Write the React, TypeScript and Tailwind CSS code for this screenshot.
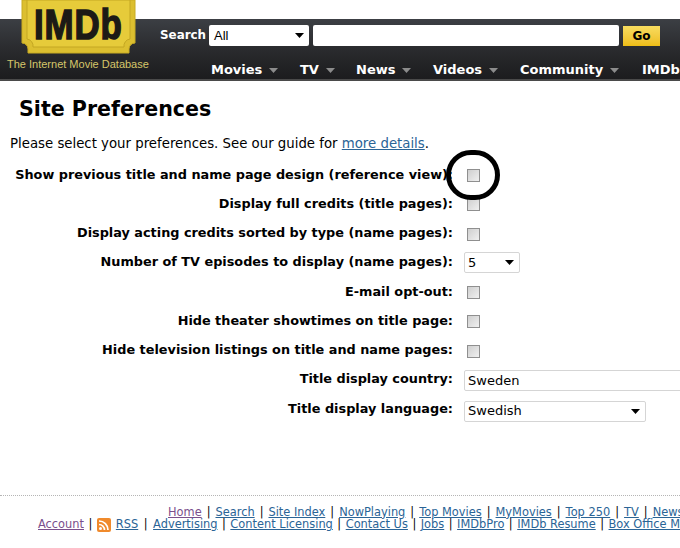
const FONT = "font-['DejaVu_Sans',Verdana,sans-serif]"

const NAV = [
  { label: 'Movies', cls: 'w-[89px]' },
  { label: 'TV', cls: 'w-[56px]' },
  { label: 'News', cls: 'w-[77px]' },
  { label: 'Videos', cls: 'w-[87px]' },
  { label: 'Community', cls: 'w-[122px]' },
]

const FOOT_1 = ['Home', 'Search', 'Site Index', 'NowPlaying', 'Top Movies', 'MyMovies', 'Top 250', 'TV', 'News', 'Showtimes']
const FOOT_2 = ['Advertising', 'Content Licensing', 'Contact Us', 'Jobs', 'IMDbPro', 'IMDb Resume', 'Box Office Mojo']

function Arrow({ cls = 'text-black' }: { cls?: string }) {
  return (
    <svg width="9" height="5" viewBox="0 0 9 5" className={cls}>
      <path d="M0 0h9L4.5 5z" fill="currentColor" />
    </svg>
  )
}

function Logo() {
  return (
    <div className="absolute left-[21px] top-0 flex h-[54px] w-[115px] items-center justify-center overflow-hidden">
      <svg width="115" height="54" viewBox="0 0 115 54" className="absolute inset-0">
        <path d="M1 0h113v43a6 6 0 0 0-6 6v4H7v-4a6 6 0 0 0-6-6z" fill="#dcbf30" stroke="#c8ab22" strokeWidth="1" />
        <path d="M6 0h103v39a7 7 0 0 0-6 8H12a7 7 0 0 0-6-8z" fill="#e6cb3a" stroke="#c4a722" strokeWidth="1" />
      </svg>
      <span className="relative mt-[-5px] scale-x-[0.83] font-['Liberation_Sans',sans-serif] text-[42px] leading-none font-bold tracking-[1px] text-[#1c1a16] [-webkit-text-stroke:1.5px_#1c1a16]">
        IMDb
      </span>
    </div>
  )
}

function Check() {
  return (
    <input
      type="checkbox"
      className="mt-[3px] ml-[3px] block h-[13px] w-[13px] appearance-none border border-[#8f8f8f] bg-gradient-to-br from-[#cfcfcf] to-[#f0f0f0]"
    />
  )
}

function Pick({ value, cls }: { value: string; cls: string }) {
  return (
    <div className={`flex h-[21px] items-center justify-between rounded-[2px] border border-[#d5d5d5] bg-white pr-[5px] pl-[3px] text-[13px] text-black ${cls}`}>
      <span>{value}</span>
      <Arrow />
    </div>
  )
}

function Row({ label, children }: { label: string; children: React.ReactNode }) {
  return (
    <div className="flex h-[29.25px] items-center">
      <div className="w-[453px] shrink-0 text-right text-[12.83px] font-bold whitespace-nowrap text-black">{label}</div>
      <div className="ml-[11px]">{children}</div>
    </div>
  )
}

function FootLinks({ items, sep }: { items: string[]; sep: string }) {
  return (
    <>
      {items.map((t, i) => (
        <span key={t}>
          {i > 0 && <span className={`${sep} text-black`}>|</span>}
          <span className={t === 'Home' ? 'text-[#7a4f8c] underline' : 'text-[#2a6496] underline'}>{t}</span>
        </span>
      ))}
    </>
  )
}

export default function App() {
  return (
    <div className={`relative h-[548px] w-[680px] overflow-hidden bg-white ${FONT}`}>
      <div className="mt-[19px] h-[62px] border-b-2 border-[#4a4a4a] bg-gradient-to-b from-[#3c3f44] via-[#2a2b2e] to-[#1c1c1e]">
        <div className="flex h-[33px] items-center pl-[160px]">
          <span className="w-[49px] text-[11.9px] font-bold text-white">Search</span>
          <Pick value="All" cls="w-[100px] !pl-[5px] text-[12px] font-['Liberation_Sans',sans-serif] border-0" />
          <div className="ml-[4px] h-[21px] w-[306px] rounded-[2px] bg-white" />
          <div className="ml-[4px] flex h-[20px] w-[37px] items-center justify-center bg-gradient-to-b from-[#f8dc5e] to-[#eebd12] text-[12px] font-bold text-black">
            Go
          </div>
        </div>
        <div className="flex items-center pt-[9px] pl-[211px] text-[13px] leading-[18px] font-bold whitespace-nowrap text-white">
          {NAV.map((n) => (
            <div key={n.label} className={`flex shrink-0 items-center gap-[7px] ${n.cls}`}>
              {n.label}
              <Arrow cls="text-[#8c8c8c]" />
            </div>
          ))}
          <div className="shrink-0">IMDb</div>
        </div>
      </div>
      <Logo />
      <div className="absolute top-[57px] left-[7px] font-['Liberation_Sans',sans-serif] text-[11px] leading-[14px] whitespace-nowrap text-[#d6c66a]">
        The Internet Movie Database
      </div>

      <h1 className="mt-[15px] ml-[19px] text-[20.6px] leading-[26px] font-bold text-black">Site Preferences</h1>
      <p className="mt-[14px] ml-[10px] text-[13.3px] leading-[16px] text-black">
        Please select your preferences. See our guide for <span className="text-[#2a6496] underline">more details</span>.
      </p>

      <div className="mt-[7.5px]">
        <Row label="Show previous title and name page design (reference view):"><Check /></Row>
        <Row label="Display full credits (title pages):"><Check /></Row>
        <Row label="Display acting credits sorted by type (name pages):"><Check /></Row>
        <Row label="Number of TV episodes to display (name pages):"><Pick value="5" cls="mt-[2px] w-[56px]" /></Row>
        <Row label="E-mail opt-out:"><Check /></Row>
        <Row label="Hide theater showtimes on title page:"><Check /></Row>
        <Row label="Hide television listings on title and name pages:"><Check /></Row>
        <Row label="Title display country:">
          <div className="mt-[3px] flex h-[21px] w-[240px] items-center rounded-[2px] border border-[#d5d5d5] bg-white pl-[3px] text-[13px]">Sweden</div>
        </Row>
        <Row label="Title display language:"><Pick value="Swedish" cls="mt-[6px] w-[182px]" /></Row>
      </div>

      <div className="mt-[72px] border-t border-dotted border-[#b5b5b5] pt-[10px] text-[11.4px] leading-[13px] whitespace-nowrap">
        <div className="pl-[168px]"><FootLinks items={FOOT_1} sep="px-[5px]" /></div>
        <div className="-mt-[1px] flex items-center pl-[38px]">
          <span className="text-[#7a4f8c] underline">Account</span>
          <span className="px-[4.5px] text-black">|</span>
          <svg width="14" height="14" viewBox="0 0 14 14" className="shrink-0">
            <rect width="14" height="14" rx="2" fill="#f08a2c" />
            <circle cx="3.5" cy="10.5" r="1.5" fill="#fff" />
            <path d="M2 6.5a5.5 5.5 0 0 1 5.5 5.5M2 3a9 9 0 0 1 9 9" fill="none" stroke="#fff" strokeWidth="1.7" />
          </svg>
          <span className="ml-[5px] text-[#2a6496] underline">RSS</span>
          <span className="px-[5.5px] text-black">|</span>
          <span><FootLinks items={FOOT_2} sep="px-[4.5px]" /></span>
        </div>
      </div>

      {/* annotation circled on top of the screenshot */}
      <div className="absolute top-[150px] left-[446px] h-[50px] w-[54px] rounded-full border-[5px] border-black" />
    </div>
  )
}
